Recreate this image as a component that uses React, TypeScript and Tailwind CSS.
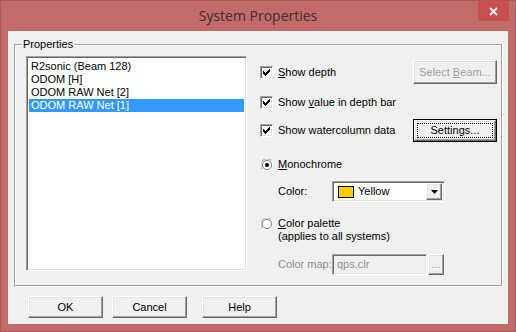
import type { ReactNode } from "react";

// classic 3D edges
const raised =
  "bg-[#f0f0f0] border border-t-white border-l-white border-b-[#696969] border-r-[#696969] shadow-[inset_-1px_-1px_0_#a0a0a0,inset_1px_1px_0_#e3e3e3]";
const sunken =
  "border border-t-[#a0a0a0] border-l-[#a0a0a0] border-b-white border-r-white shadow-[inset_1px_1px_0_#696969,inset_-1px_-1px_0_#e3e3e3]";

const CHECK: [number, number][] = [
  [6, 0], [5, 1], [6, 1], [0, 2], [4, 2], [5, 2], [6, 2],
  [0, 3], [1, 3], [3, 3], [4, 3], [5, 3], [0, 4], [1, 4], [2, 4], [3, 4], [4, 4],
  [1, 5], [2, 5], [3, 5], [2, 6],
];

function Checkbox({ checked }: { checked?: boolean }) {
  return (
    <div className={`w-[13px] h-[13px] shrink-0 bg-white flex items-center justify-center ${sunken}`}>
      {checked && (
        <svg width="7" height="7" viewBox="0 0 7 7" shapeRendering="crispEdges">
          {CHECK.map(([x, y]) => (
            <rect key={`${x}-${y}`} x={x} y={y} width="1" height="1" fill="#000" />
          ))}
        </svg>
      )}
    </div>
  );
}

function Radio({ checked }: { checked?: boolean }) {
  return (
    <svg width="12" height="12" viewBox="0 0 12 12" className="shrink-0 ml-[1px]">
      <path d="M1.5 10.5 A6 6 0 0 1 10.5 1.5" fill="none" stroke="#a0a0a0" strokeWidth="1" />
      <path d="M10.5 1.5 A6 6 0 0 1 1.5 10.5" fill="none" stroke="#ffffff" strokeWidth="1" />
      <circle cx="6" cy="6" r="4.6" fill="#fff" stroke="#696969" strokeWidth="0.8" />
      {checked && <circle cx="6" cy="6" r="2" fill="#000" />}
    </svg>
  );
}

function U({ children }: { children: ReactNode }) {
  return <span className="underline underline-offset-[1px]">{children}</span>;
}

function Button({
  children,
  className = "",
  disabled,
}: {
  children: ReactNode;
  className?: string;
  disabled?: boolean;
}) {
  return (
    <div
      className={`flex items-center justify-center ${raised} ${disabled ? "text-[#a0a0a0]" : "text-black"} ${className}`}
    >
      {children}
    </div>
  );
}

const items = ["R2sonic (Beam 128)", "ODOM [H]", "ODOM RAW Net [2]", "ODOM RAW Net [1]"];

export default function App() {
  return (
    <div className="w-[516px] h-[332px] bg-[#c26b6b] border border-[#a95959] flex flex-col font-['Liberation_Sans',Arial,sans-serif] text-[11px] leading-[13px] text-black">
      {/* title bar */}
      <div className="h-[30px] grid grid-cols-[1fr_auto_1fr] items-start">
        <div />
        <div className="pt-[5px] text-[14px] leading-[20px] text-[#402c2c] font-['Open_Sans',sans-serif]">
          System Properties
        </div>
        <div className="flex justify-end pr-[6px]">
          <div className="w-[31px] h-[20px] bg-[#c85050] flex items-center justify-center">
            <svg width="9" height="9" viewBox="0 0 9 9">
              <path d="M1 1 L8 8 M8 1 L1 8" stroke="#fff" strokeWidth="1.8" />
            </svg>
          </div>
        </div>
      </div>

      {/* client area */}
      <div className="mx-[7px] mb-[7px] flex-1 bg-[#f0f0f0] flex flex-col">
        <fieldset className="ml-[6px] mt-[7px] w-[488px] h-[248px] border border-[#a0a0a0] shadow-[inset_1px_1px_0_#fff,1px_1px_0_#fff] p-0 m-0">
          <legend className="ml-[7px] px-[1px] h-[13px] bg-[#f0f0f0]">Properties</legend>
          <div className="mt-[5px] flex">
            {/* list box */}
            <div className={`ml-[11px] w-[221px] h-[215px] bg-white p-[2px] pt-[3px] ${sunken}`}>
              {items.map((t, i) => (
                <div
                  key={t}
                  className={`h-[13px] pl-[2px] whitespace-nowrap ${i === 3 ? "bg-[#3399ff] text-white" : ""}`}
                >
                  {t}
                </div>
              ))}
            </div>

            {/* options */}
            <div className="ml-[13px] w-[237px] flex flex-col">
              <div className="mt-[4px] h-[24px] flex items-center">
                <Checkbox checked />
                <span className="ml-[5px]">
                  <U>S</U>how depth
                </span>
                <Button disabled className="ml-auto w-[84px] h-[24px]">
                  <span>
                    Select <U>B</U>eam...
                  </span>
                </Button>
              </div>

              <div className="mt-[12px] h-[13px] flex items-center">
                <Checkbox checked />
                <span className="ml-[5px]">
                  Show <U>v</U>alue in depth bar
                </span>
              </div>

              <div className="mt-[10px] h-[23px] flex items-center">
                <Checkbox checked />
                <span className="ml-[5px]">Show watercolumn data</span>
                <div className="ml-auto w-[84px] h-[23px] border border-[#000] flex">
                  <Button className="flex-1 p-[2px]">
                    <div className="w-full h-full border border-dotted border-black flex items-center justify-center">
                      Settings...
                    </div>
                  </Button>
                </div>
              </div>

              <div className="mt-[16px] h-[13px] flex items-center">
                <Radio checked />
                <span className="ml-[5px]">
                  <U>M</U>onochrome
                </span>
              </div>

              <div className="mt-[10px] h-[21px] flex items-center">
                <span className="ml-[18px] w-[54px]">Color:</span>
                <div className={`w-[113px] h-[21px] bg-white flex items-center p-[2px] ${sunken}`}>
                  <div className="ml-[3px] w-[16px] h-[12px] bg-[#ffcc00] border border-black" />
                  <span className="ml-[4px]">Yellow</span>
                  <Button className="ml-auto w-[16px] h-[17px]">
                    <svg width="7" height="4" viewBox="0 0 7 4">
                      <path d="M0 0 H7 L3.5 4 Z" fill="#000" />
                    </svg>
                  </Button>
                </div>
              </div>

              <div className="mt-[15px] flex items-start">
                <div className="h-[13px] flex items-center">
                  <Radio />
                </div>
                <div className="ml-[5px]">
                  <div>
                    <U>C</U>olor palette
                  </div>
                  <div>(applies to all systems)</div>
                </div>
              </div>

              <div className="mt-[11px] h-[21px] flex items-center">
                <span className="ml-[18px] w-[54px] text-[#8d8d8d]">Color map:</span>
                <div className={`w-[95px] h-[21px] bg-[#f0f0f0] flex items-center pl-[4px] text-[#8d8d8d] ${sunken}`}>
                  qps.clr
                </div>
                <Button disabled className="ml-[1px] w-[16px] h-[21px] text-[#8d8d8d]">
                  ...
                </Button>
              </div>
            </div>
          </div>
        </fieldset>

        {/* bottom buttons */}
        <div className="mt-[10px] ml-[20px] flex">
          <Button className="w-[75px] h-[22px]">OK</Button>
          <Button className="ml-[9px] w-[75px] h-[22px]">Cancel</Button>
          <Button className="ml-[15px] w-[75px] h-[22px]">Help</Button>
        </div>
      </div>
    </div>
  );
}
